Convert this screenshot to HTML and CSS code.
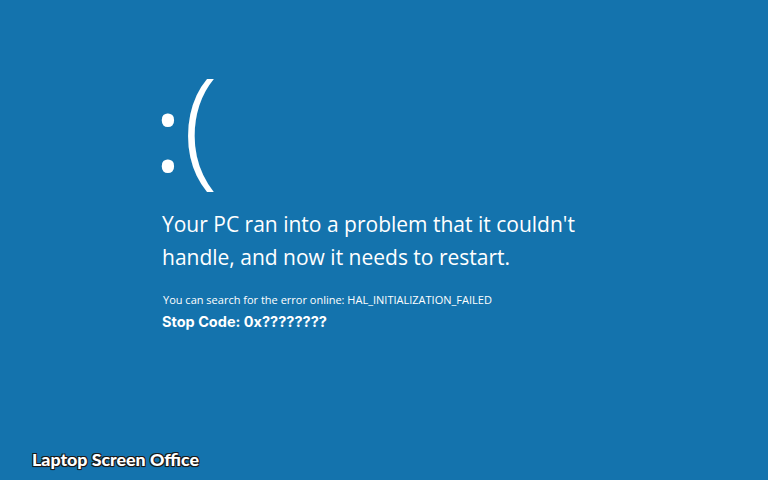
FILE: index.html
```html
<!DOCTYPE html>
<html>
<head>
<meta charset="utf-8">
<link rel="stylesheet" href="styles.css">
</head>
<body>
<main class="screen">
  <div class="content">
    <div class="face"><span class="colon">:</span><span class="paren">(</span></div>
    <p class="headline">Your PC ran into a problem that it couldn't<br>handle, and now it needs to restart.</p>
    <p class="info">You can search for the error online: HAL_INITIALIZATION_FAILED</p>
    <p class="stop">Stop Code: 0x????????</p>
  </div>
  <div class="watermark">Laptop Screen Office</div>
</main>
</body>
</html>
```
FILE: styles.css
```css
html, body {
  margin: 0;
  padding: 0;
  width: 768px;
  height: 480px;
  overflow: hidden;
}
.screen {
  width: 768px;
  height: 480px;
  background: #1473ad;
  color: #ffffff;
  font-family: "Open Sans", "Noto Sans", sans-serif;
  display: flex;
  flex-direction: column;
  justify-content: space-between;
  box-sizing: border-box;
  padding: 62px 0 10px 0;
}
.content {
  padding-left: 160px;
}
.face {
  font-size: 130px;
  line-height: 120px;
  margin: 0 0 0 -6px;
  white-space: nowrap;
}
.colon {
  font-size: 106px;
  font-weight: 400;
}
.paren {
  font-weight: 300;
  margin-left: 1px;
}
.headline {
  margin: 17px 0 0 2px;
  font-size: 21px;
  line-height: 33px;
  font-weight: 400;
}
.info {
  margin: 19px 0 0 3px;
  font-size: 11px;
  line-height: 14px;
}
.stop {
  margin: 5px 0 0 2px;
  font-family: "Inter", sans-serif;
  font-size: 14.5px;
  font-weight: 700;
  line-height: 20px;
}
.watermark {
  margin-left: 32px;
  font-family: "Lato", sans-serif;
  font-weight: 900;
  font-size: 17.8px;
  color: #ffffff;
  text-shadow: -1px -1px 0 #1a1a1a, 1px -1px 0 #1a1a1a, -1px 1px 0 #1a1a1a, 1px 1px 0 #1a1a1a, 0 1px 1px #000;
}
```
